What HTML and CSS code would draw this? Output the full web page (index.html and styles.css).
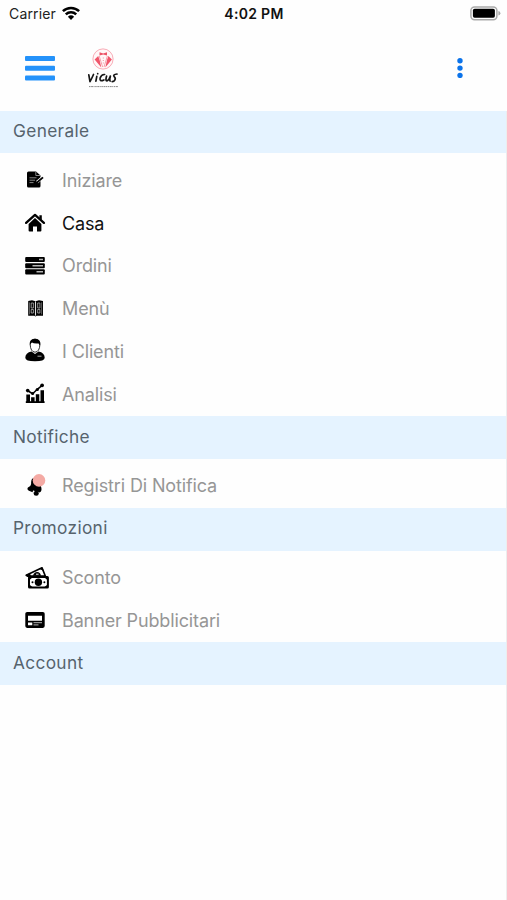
FILE: index.html
```html
<!DOCTYPE html>
<html lang="it">
<head>
<meta charset="utf-8">
<title>Menu</title>
<link rel="stylesheet" href="styles.css">
</head>
<body>
<div class="status">
  <div class="carrier"><span>Carrier</span>
    <svg width="18" height="14" viewBox="0 0 18 14" fill="none" stroke="#000" stroke-width="2.5"><path d="M.9 5.2a11.6 11.6 0 0 1 16.2 0M3.8 8.3a7.5 7.5 0 0 1 10.4 0"/><path d="M9 14 5.9 10.8a4.5 4.5 0 0 1 6.2 0z" fill="#000" stroke="none"/></svg>
  </div>
  <div class="time">4:02 PM</div>
  <svg class="battery" width="31" height="15" viewBox="0 0 31 15"><rect x=".9" y=".9" width="26" height="12.8" rx="3.6" fill="#fff" stroke="#aaa" stroke-width="1.5"/><rect x="2.9" y="2.8" width="22" height="9" rx="1.7"/><path d="M28.4 5v4.6q2-.6 2-2.3T28.4 5z" fill="#aaa"/></svg>
</div>
<header class="bar">
  <svg class="burger" width="30" height="26" viewBox="0 0 30 26" fill="#2492fa"><rect y="0" width="30" height="5" rx="1"/><rect y="9.8" width="30" height="5" rx="1"/><rect y="19.6" width="30" height="5" rx="1"/></svg>
  <svg class="logo" width="34" height="42" viewBox="0 0 34 42">
    <circle cx="16" cy="11" r="10.1" fill="#fff7f8" stroke="#f7a3ae" stroke-width=".9"/>
    <path d="M12.5 4.2 16.2 5.6 20 4.2v3.4l-3.8-1-3.7 1z" fill="#ec5367"/>
    <path d="M11.2 8 7.6 11.5 14.3 19.5 12.6 12z M21.4 8l3.5 3.5L18.3 19.5 20 12z" fill="#f0566b"/>
    <path d="M12.2 8 15.6 19M20.4 8 17 19" stroke="#f28a98" fill="none" stroke-width=".8"/>
    <path d="M16.3 9.5v7" stroke="#ee7584" stroke-width=".8" stroke-dasharray="1 1.5"/>
    <g fill="none" stroke="#161616" stroke-linecap="round" stroke-linejoin="round" stroke-width="1.7"><path d="M1.8 26.8 3 33.6Q5 30 6.5 26.5M9.8 28.3 8.9 33.2M10.7 25.6v.1M17.6 26.5q-3-.3-4.5 3.5-.8 4.1 3.8 1.9M19.6 28q-1.5 5.2.4 4.8 2-.4 3.4-4.8-1.1 4-.3 5M30 26q-4.2.5-3 2.4 2 1.8.8 3.7-.8 1.4-2.6 1.5"/></g>
    <path d="M2 38.6h29" stroke="#888" stroke-width="1" stroke-dasharray="1.5 .6 2 .5 1 .6"/>
  </svg>
  <svg class="dots" width="6" height="20" viewBox="0 0 6 20" fill="#0b73ea"><circle cx="3" cy="2.8" r="2.7"/><circle cx="3" cy="10.1" r="2.7"/><circle cx="3" cy="17.4" r="2.7"/></svg>
</header>
<main>
  <h2>Generale</h2>
  <ul>
    <li><svg viewBox="0 0 26 26"><path d="M3.5 4.6H11l4.5 3.8V19a1.5 1.5 0 0 1-1.5 1.500H3.500A1.500 1.500 0 0 1 2 19V6.100a1.500 1.500 0 0 1 1.500-1.500z"/><path d="M10.800 4.800v3.700h4.400M4.500 10.800h7M4.500 13.200h5.500M4.500 15.600h4" stroke="#aaa" fill="none" stroke-width=".8"/><path d="m12 15.200 5.700-4.700" stroke="#fff" stroke-width="3"/><path d="m10.500 16.800 7.500-6.400" stroke="#000" stroke-width="1.900"/></svg><span>Iniziare</span></li>
    <li class="active"><svg viewBox="0 0 26 26"><path d="M3.600 13.900 10 8.100l6.400 5.800v6.500q0 1-1 1H12v-4.800H8v4.800H4.600q-1 0-1-1z"/><path d="M1.100 12.900 10 4.900l8.900 8" fill="none" stroke="#000" stroke-width="2.300" stroke-linecap="round" stroke-linejoin="round"/><path d="M14.400 5.200h2.400v4.800l-2.400-2z"/></svg><span>Casa</span></li>
    <li><svg viewBox="0 0 26 26"><rect x=".2" y="4" width="19.600" height="5.100" rx="1"/><rect x=".2" y="10.200" width="19.600" height="5.100" rx="1"/><rect x=".2" y="16.300" width="19.600" height="5.100" rx="1"/><path d="M14 6.500h4M7.500 12.700H18M11.500 18.800H18" stroke="#b5b5b5" stroke-width="1.400"/></svg><span>Ordini</span></li>
    <li><svg viewBox="0 0 26 26"><path d="M3.200 5 7 4.200l3.500 1 3.500-1 4 .8v14.800h-6.300l-1.200.8-1.200-.8H3.200z"/><path d="M10.500 5.400v14.200" stroke="#ddd" stroke-width="1.100"/><path d="M4.500 6.400v12M16.600 6.400v12" stroke="#999" stroke-width=".6"/><path d="M6.200 7h2.200v5H6.200zm6.500 0h2.200v5h-2.200zM6.200 13.500h2.200V17H6.200zm6.500 0h2.200V17h-2.200z" fill="none" stroke="#ccc" stroke-width=".7"/></svg><span>Menù</span></li>
    <li><svg viewBox="0 0 26 26"><path d="M.3 19.700Q.3 14.700 6.600 13.500L10 16l3.500-2.500q6.200 1.200 6.200 6.200 0 3.600-9.700 3.600T.3 19.700z"/><path d="M5.200 6.200Q5 1.200 10 1.200t4.900 5Q14.700 13.800 10 14.200 5.400 13.800 5.200 6.200z" fill="#fff" stroke="#000" stroke-width=".8"/><path d="M4.900 7.200Q4 1 10 .7q6 .3 5.200 6.500-1-.3-1.600-1.800Q8.500 5.800 7 4.400 5.800 5 4.900 7.200z"/><path d="M12.500 18.200h4" stroke="#aaa"/></svg><span>I Clienti</span></li>
    <li><svg viewBox="0 0 26 26"><path d="M1.300 13.600H5v7.700H1.300zm4.800 2.600h3.500v5.100H6.100zm4.700-3h3.500v8.100h-3.500zm4.700-4H19v12.100h-3.500zM.8 20.300h18.800v1.600H.8z"/><path d="m2.400 9.500 5.200 3.200 4.700-4.400 5.200-4.200" fill="none" stroke="#000" stroke-width="1.500"/><circle cx="2.700" cy="9.600" r="1.800"/><circle cx="7.600" cy="12.400" r="1.500"/><circle cx="12.300" cy="8.500" r="1.600"/><circle cx="17.100" cy="4.300" r="1.900"/></svg><span>Analisi</span></li>
  </ul>
  <h2>Notifiche</h2>
  <ul>
    <li><svg viewBox="0 0 26 26"><path d="M7.600 5.400q3-1.800 6 1l2.300 6.800q1.800 4.400-1.200 6.200-2.600-1.600-4 .2-4-.3-6.800-1.900-2.300-1-1-3.100 3.200-1.400 3.200-3.500-.2-4.400 1.500-5.700z"/><circle cx="11.200" cy="20.300" r="2.500"/><circle cx="8.600" cy="18.400" r=".9" fill="#fff"/><circle cx="14" cy="7.400" r="6.300" fill="#f4aaa4"/></svg><span>Registri Di Notifica</span></li>
  </ul>
  <h2>Promozioni</h2>
  <ul>
    <li><svg viewBox="0 0 26 26"><path d="M1.200 10.200 17 2.800l3.400 8.400H3z" fill="#fff" stroke="#000" stroke-width="1.700" stroke-linejoin="round"/><path d="M14 3.800 17.500 2.500l1.300 3.600zM1 9.800l4-1.500 1 3.200H2z"/><path d="M8 10.800q1-3.600 4.200-3.700 3 0 3.800 3.700z"/><path d="M11 9.200h2.600" stroke="#fff"/><rect x="4" y="12" width="18.900" height="10.600" rx=".5" fill="#fff" stroke="#000" stroke-width="2"/><path d="M4 15.500 8 12H4zm18.900 0-4-3.500h4zM4 19.200l4 3.400H4zm18.900 0-4 3.400h4z"/><circle cx="13.400" cy="17.300" r="3.700"/><circle cx="7.500" cy="17.300" r="1"/><circle cx="19.400" cy="17.300" r="1"/></svg><span>Sconto</span></li>
    <li><svg viewBox="0 0 26 26"><rect x=".3" y="4.900" width="19.400" height="16" rx="1.800"/><path d="M3 8.800h14v5H3zM3 15.400h4.300v2.900H3z" fill="#fff"/><path d="M8.500 15.700H17M8.500 17.900h5" stroke="#ccc" stroke-width=".9"/></svg><span>Banner Pubblicitari</span></li>
  </ul>
  <h2>Account</h2>
</main>
</body>
</html>
```
FILE: styles.css
```css
* { box-sizing: border-box; }
body { margin: 0; height: 900px; background: #fefefe; font-family: Inter, "Liberation Sans", sans-serif; display: flex; flex-direction: column; overflow: hidden; }
.status { height: 28px; display: grid; grid-template-columns: 1fr auto 1fr; align-items: center; padding: 0 6px 1px 9px; font-size: 14px; color: #222; }
.carrier { display: flex; align-items: center; gap: 6px; letter-spacing: .15px; }
.carrier svg { margin-top: -2px; }
.time { font-weight: 600; letter-spacing: .3px; color: #111; margin-right: 2px; }
.battery { justify-self: end; }
.bar { height: 82.5px; display: flex; align-items: center; padding: 0 44px 2px 25px; }
.burger { margin-top: 1px; }
.logo { margin: 2px 0 0 32px; }
.dots { margin-left: auto; }
main { flex: 1; border-right: 1px solid #ededed; }
h2 { margin: 0; height: 42.75px; padding: 0 13px 2.5px; background: #e5f3ff; color: #56636d; font-size: 17.3px; font-weight: 400; letter-spacing: .33px; display: flex; align-items: center; }
ul { margin: 0; padding: 6.25px 0 0; list-style: none; }
li { height: 42.75px; padding: 0 0 1.2px 25px; display: flex; align-items: center; gap: 11px; color: #969696; font-size: 18px; letter-spacing: -.13px; }
li svg { width: 26px; height: 26px; flex: none; }
.active { color: #111; }
```
